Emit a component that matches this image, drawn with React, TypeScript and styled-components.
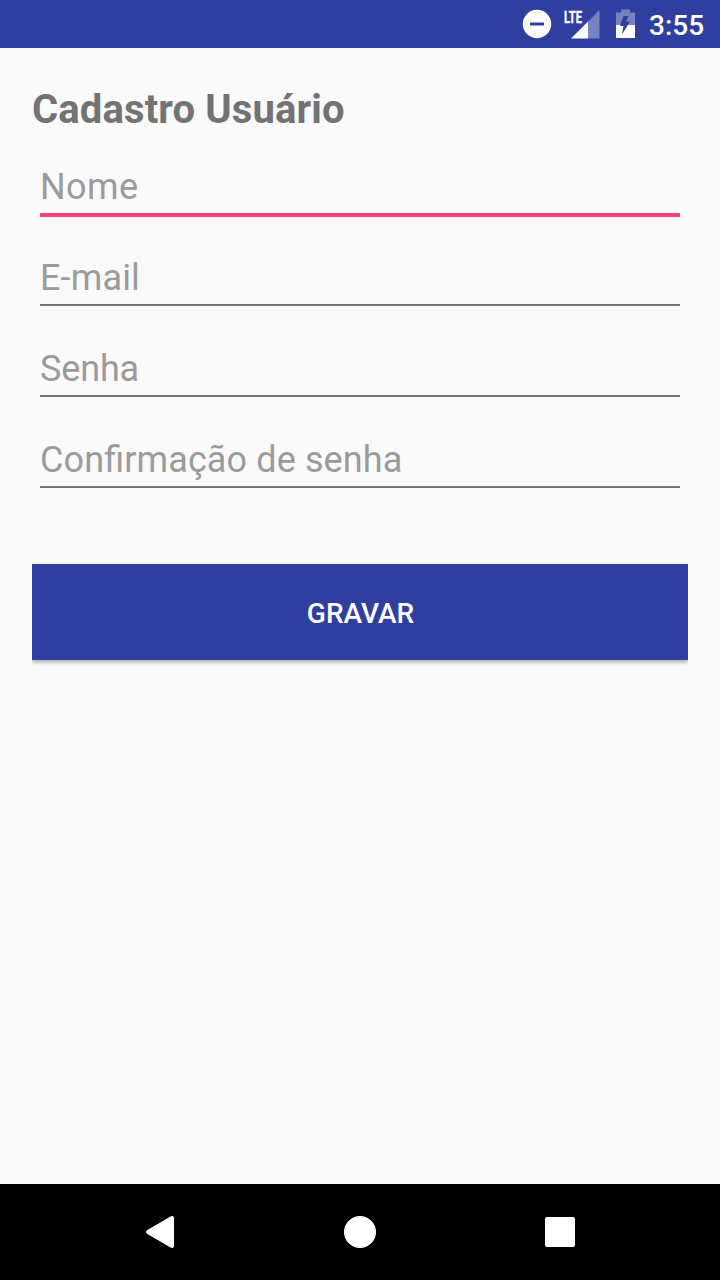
import React from "react";
import styled, { createGlobalStyle } from "styled-components";

const Global = createGlobalStyle`
  * { box-sizing: border-box; }
  body { margin: 0; font-family: Roboto, sans-serif; background: #fafafa; }
`;
const Screen = styled.div`
  width: 720px; height: 1280px; display: flex; flex-direction: column; background: #fafafa; overflow: hidden;
`;
const StatusBar = styled.header`
  height: 48px; flex: none; background: #303f9f; color: #fff; display: flex; justify-content: flex-end;
`;
const StatusIcons = styled.svg`
  width: 130px; height: 48px; display: block;
`;
const Clock = styled.time`
  width: 71px; padding-top: 1px; font-size: 28px; font-weight: 500; line-height: 50px; white-space: nowrap;
`;
const LteLabel = styled.text`
  font: 700 17px Roboto, sans-serif; stroke: #fff; stroke-width: 0.4px;
`;
const Content = styled.main`
  flex: 1; padding: 32px 32px 0; display: flex; flex-direction: column;
`;
const Title = styled.h1`
  margin: 0; height: 53px; line-height: 59px; font-size: 40px; font-weight: 700; color: #737373; white-space: nowrap;
  letter-spacing: 0.13px;
`;
const Field = styled.input<{ $active?: boolean; $tracking?: number }>`
  margin: ${(p) => (p.$active ? "20px 8px 0" : "24px 8px 2px")};
  height: ${(p) => (p.$active ? 64 : 65)}px; padding: ${(p) => (p.$active ? 8 : 11)}px 0 0;
  border: 0; outline: 0; border-radius: 0;
  border-bottom: ${(p) => (p.$active ? "4px solid #ff4081" : "2px solid #757575")};
  background: transparent; font: 400 36px Roboto, sans-serif; color: #212121;
  letter-spacing: ${(p) => p.$tracking ?? 0}px; font-feature-settings: "liga" 1;
  &::placeholder { color: #9b9b9b; opacity: 1; }
`;
const Fields = styled.form`
  display: flex; flex-direction: column;
`;
const SaveButton = styled.button`
  margin: 74px 0 0; height: 96px; border: 0; padding: 3px 0 0 1px; background: #303f9f; color: #fff;
  font: 500 28px Roboto, sans-serif;
  box-shadow: 0 3px 3px rgba(0, 0, 0, 0.23), 0 0 2px rgba(0, 0, 0, 0.12);
  clip-path: inset(-4px 0 -10px 0);
`;
const NavBar = styled.nav`
  height: 96px; flex: none; background: #000; display: flex; justify-content: center; align-items: center; gap: 160px;
`;
const NavIcon = styled.svg`
  width: 40px; height: 40px; fill: #fff;
`;

export default function App() {
  return (
    <Screen>
      <Global />
      <StatusBar>
        <StatusIcons viewBox="519 0 130 48" fill="#fff">
          <circle cx="537" cy="24" r="14.2" />
          <path d="M530 22.5h14v3h-14z" fill="#303f9f" />
          <path d="M599.5 10v28.5H588v-17z" opacity=".35" />
          <path d="M588 21.5v17h-17z" />
          <LteLabel x="564" y="22.5" textLength="18" lengthAdjust="spacingAndGlyphs">LTE</LteLabel>
          <path d="M616 12.5h5V9.500h9v3h5V25h-19z" opacity=".35" />
          <path d="M616 25h19v13h-19z" />
          <path d="M623.5 16h5l-2.500 5.500h4l-8 13 1.500-8.500h-3.500z" fill="#303f9f" />
        </StatusIcons>
        <Clock>3:55</Clock>
      </StatusBar>
      <Content>
        <Title>Cadastro Usuário</Title>
        <Fields>
          <Field $active $tracking={0.4} placeholder="Nome" />
          <Field $tracking={0.15} placeholder="E-mail" />
          <Field $tracking={-0.15} placeholder="Senha" />
          <Field $tracking={0.11} placeholder="Confirmação de senha" />
          <SaveButton type="button">GRAVAR</SaveButton>
        </Fields>
      </Content>
      <NavBar>
        <NavIcon viewBox="0 0 40 40"><path d="M7 18.300L30.500 4.500Q34 3 34 6.500v27q0 3.500-3.500 2L7 21.700q-2-1.700 0-3.400z" /></NavIcon>
        <NavIcon viewBox="0 0 40 40"><circle cx="20" cy="20" r="16" /></NavIcon>
        <NavIcon viewBox="0 0 40 40"><rect x="5" y="5" width="30" height="30" rx="2" /></NavIcon>
      </NavBar>
    </Screen>
  );
}
